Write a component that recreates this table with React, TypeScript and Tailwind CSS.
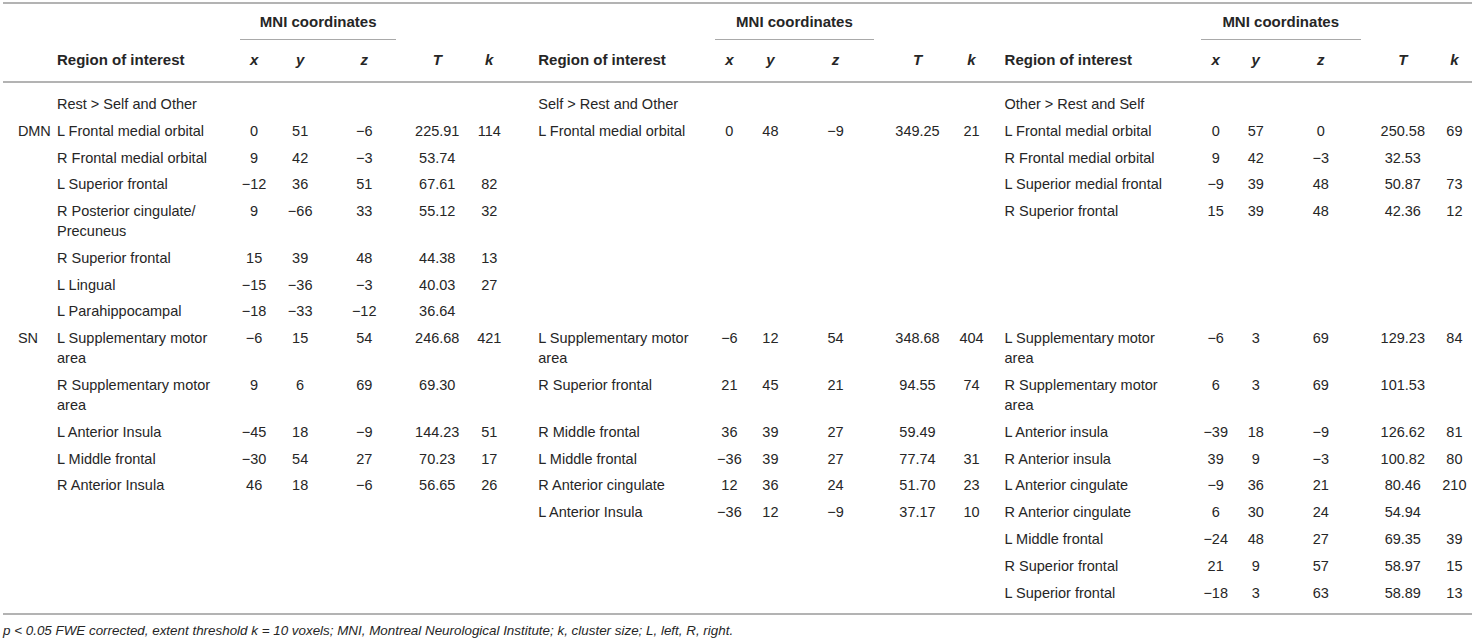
const D = "\u2212";

type Row = [string, string, string, string, string, string];

const g1dmn: Row[] = [
  ["L Frontal medial orbital", "0", "51", D + "6", "225.91", "114"],
  ["R Frontal medial orbital", "9", "42", D + "3", "53.74", ""],
  ["L Superior frontal", D + "12", "36", "51", "67.61", "82"],
  ["R Posterior cingulate/ Precuneus", "9", D + "66", "33", "55.12", "32"],
  ["R Superior frontal", "15", "39", "48", "44.38", "13"],
  ["L Lingual", D + "15", D + "36", D + "3", "40.03", "27"],
  ["L Parahippocampal", D + "18", D + "33", D + "12", "36.64", ""],
];
const g2dmn: Row[] = [["L Frontal medial orbital", "0", "48", D + "9", "349.25", "21"]];
const g3dmn: Row[] = [
  ["L Frontal medial orbital", "0", "57", "0", "250.58", "69"],
  ["R Frontal medial orbital", "9", "42", D + "3", "32.53", ""],
  ["L Superior medial frontal", D + "9", "39", "48", "50.87", "73"],
  ["R Superior frontal", "15", "39", "48", "42.36", "12"],
];

const g1sn: Row[] = [
  ["L Supplementary motor area", D + "6", "15", "54", "246.68", "421"],
  ["R Supplementary motor area", "9", "6", "69", "69.30", ""],
  ["L Anterior Insula", D + "45", "18", D + "9", "144.23", "51"],
  ["L Middle frontal", D + "30", "54", "27", "70.23", "17"],
  ["R Anterior Insula", "46", "18", D + "6", "56.65", "26"],
];
const g2sn: Row[] = [
  ["L Supplementary motor area", D + "6", "12", "54", "348.68", "404"],
  ["R Superior frontal", "21", "45", "21", "94.55", "74"],
  ["R Middle frontal", "36", "39", "27", "59.49", ""],
  ["L Middle frontal", D + "36", "39", "27", "77.74", "31"],
  ["R Anterior cingulate", "12", "36", "24", "51.70", "23"],
  ["L Anterior Insula", D + "36", "12", D + "9", "37.17", "10"],
];
const g3sn: Row[] = [
  ["L Supplementary motor area", D + "6", "3", "69", "129.23", "84"],
  ["R Supplementary motor area", "6", "3", "69", "101.53", ""],
  ["L Anterior insula", D + "39", "18", D + "9", "126.62", "81"],
  ["R Anterior insula", "39", "9", D + "3", "100.82", "80"],
  ["L Anterior cingulate", D + "9", "36", "21", "80.46", "210"],
  ["R Anterior cingulate", "6", "30", "24", "54.94", ""],
  ["L Middle frontal", D + "24", "48", "27", "69.35", "39"],
  ["R Superior frontal", "21", "9", "57", "58.97", "15"],
  ["L Superior frontal", D + "18", "3", "63", "58.89", "13"],
];

const widths = [54, 175, 44, 48, 80, 66, 38, 199, 44, 38, 92, 72, 36, 203, 46, 34, 96, 68, 35];

const regionPad = ["pl-0", "pl-[30px]", "pl-[15px] pr-4"];
const cell = "py-[3.4px] leading-[20px] align-top";

function Group({ row, g }: { row?: Row; g: number }) {
  const r = row ?? ["", "", "", "", "", ""];
  return (
    <>
      <td className={`${cell} text-left ${regionPad[g]}`}>{r[0]}</td>
      {r.slice(1).map((v, i) => (
        <td key={i} className={`${cell} text-center`}>
          {v}
        </td>
      ))}
    </>
  );
}

function Section({ label, a, b, c }: { label: string; a: Row[]; b: Row[]; c: Row[] }) {
  const n = Math.max(a.length, b.length, c.length);
  return (
    <>
      {Array.from({ length: n }).map((_, i) => (
        <tr key={i}>
          <td className={`${cell} pl-[15px] text-left tracking-[-0.2px]`}>{i === 0 ? label : ""}</td>
          <Group row={a[i]} g={0} />
          <Group row={b[i]} g={1} />
          <Group row={c[i]} g={2} />
        </tr>
      ))}
    </>
  );
}

function HeadTop() {
  return (
    <>
      <th colSpan={3} className="px-0 align-top">
        <div className="mx-2 border-b border-[#a9a9a9] pt-[8px] pb-[7px] text-center text-[15px] leading-[20px] font-bold whitespace-nowrap">
          MNI coordinates
        </div>
      </th>
      <th />
      <th />
    </>
  );
}

function HeadCols({ g }: { g: number }) {
  const hc = "border-b-2 border-[#b3b3b3] pt-[10px] pb-[11px] text-[15px] leading-[20px] align-top";
  return (
    <>
      <th className={`${hc} text-left font-bold ${regionPad[g]}`}>Region of interest</th>
      {["x", "y", "z", "T", "k"].map((h) => (
        <th key={h} className={`${hc} text-center font-bold italic`}>
          {h}
        </th>
      ))}
    </>
  );
}

export default function App() {
  return (
    <div className="min-h-screen bg-white text-[#262626] font-['Liberation_Sans',Arial,sans-serif]">
      <div className="mx-[3px] mt-[2px] border-t-2 border-b-2 border-[#b3b3b3] pb-[7px]">
        <table className="w-[1469px] table-fixed border-collapse text-[14.5px]">
          <colgroup>
            {widths.map((w, i) => (
              <col key={i} style={{ width: w }} />
            ))}
          </colgroup>
          <thead>
            <tr>
              <th />
              <th />
              <HeadTop />
              <th />
              <HeadTop />
              <th />
              <HeadTop />
            </tr>
            <tr>
              <th className="border-b-2 border-[#b3b3b3]" />
              <HeadCols g={0} />
              <HeadCols g={1} />
              <HeadCols g={2} />
            </tr>
          </thead>
          <tbody>
            <tr>
              <td className={`${cell} pt-[11px]`} />
              <td colSpan={6} className={`${cell} pt-[11px] text-left`}>
                Rest &gt; Self and Other
              </td>
              <td colSpan={6} className={`${cell} pt-[11px] text-left pl-[30px]`}>
                Self &gt; Rest and Other
              </td>
              <td colSpan={6} className={`${cell} pt-[11px] text-left pl-[15px]`}>
                Other &gt; Rest and Self
              </td>
            </tr>
            <Section label="DMN" a={g1dmn} b={g2dmn} c={g3dmn} />
            <Section label="SN" a={g1sn} b={g2sn} c={g3sn} />
          </tbody>
        </table>
      </div>
      <p className="mt-[8px] pl-[3px] text-[13.4px] italic leading-[16px]">
        p &lt; 0.05 FWE corrected, extent threshold k = 10 voxels; MNI, Montreal Neurological Institute; k, cluster size; L,
        left, R, right.
      </p>
    </div>
  );
}
